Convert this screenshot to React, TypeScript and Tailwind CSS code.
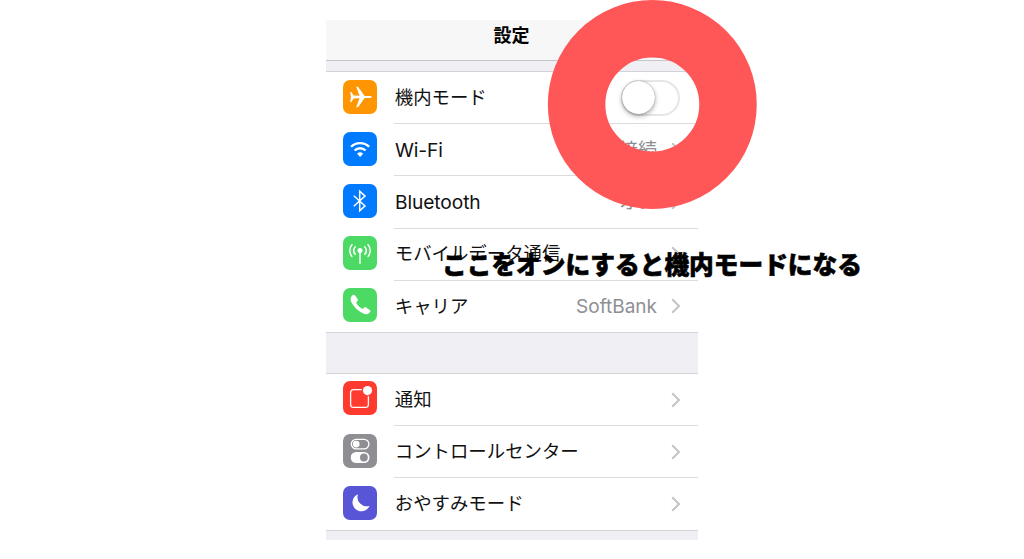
import type { ReactNode } from "react"

function Plane() {
    return (
        <svg viewBox="0 0 34 34" className="size-full" fill="#fff">
            <path d="M7.200 12h1.200l2.300 3.600 5.800.2-3.300-9.100h1.800l6.600 9.300h5.200c1.100 0 1.900.4 1.900 1s-.8 1-1.900 1h-5.200L15 27.200h-1.800l3.300-9-5.800.2L8.400 22H7.200l.7-5z" />
        </svg>
    )
}

function Wifi() {
    return (
        <svg viewBox="0 0 34 34" className="size-full" fill="none" stroke="#fff" strokeWidth="2.3">
            <path d="M8 14.8a13 13 0 0 1 18.2 0" />
            <path d="M11.6 18.5a7.9 7.9 0 0 1 11 0" />
            <path d="M17.1 25l-3.1-3.2a4.5 4.5 0 0 1 6.2 0z" fill="#fff" stroke="none" />
        </svg>
    )
}

function Bluetooth() {
    return (
        <svg viewBox="0 0 34 34" className="size-full" fill="none" stroke="#fff" strokeWidth="1.5">
            <path d="M10.800 11.700l11.200 10.200-5.300 4.800V7.300l5.300 4.800-11.200 10.200" />
        </svg>
    )
}

function Antenna() {
    return (
        <svg viewBox="0 0 34 34" className="size-full" fill="none" stroke="#fff" strokeWidth="1.5" strokeLinecap="round">
            <circle cx="17" cy="14.6" r="2.5" fill="#fff" stroke="none" />
            <path d="M17 15v12.3M12.2 10.900a5.700 5.700 0 0 0 0 7.400M21.800 10.900a5.700 5.700 0 0 1 0 7.400M8.900 8.700a9.200 9.200 0 0 0 0 11.800M25.100 8.700a9.200 9.200 0 0 1 0 11.800" />
        </svg>
    )
}

function Phone() {
    return (
        <svg viewBox="0 0 34 34" className="size-full" fill="#fff">
            <path d="M9.200 7.600c1-1 2-1.200 2.700-.3l2.700 3.800c.6.9.3 1.600-.5 2.300-.8.6-1 1.200-.5 2 1.300 2.100 3 3.700 5.200 5 .8.500 1.400.3 2-.5.7-.9 1.500-1 2.300-.5l3.700 2.600c.9.7.8 1.600-.1 2.600-1.700 2-4.200 2-7 .6-5.200-2.500-9-6.500-11.200-10.700-1.400-2.700-1.200-5.100.7-6.900z" />
        </svg>
    )
}

function Notice() {
    return (
        <svg viewBox="0 0 34 34" className="size-full" fill="none" stroke="#fff" strokeWidth="1.3">
            <path d="M18.800 8.600h-8a3.200 3.200 0 0 0-3.200 3.200v11.400a3.200 3.200 0 0 0 3.200 3.200h11.400a3.200 3.200 0 0 0 3.200-3.200v-8" />
            <circle cx="24.500" cy="9.600" r="4.600" fill="#fff" stroke="none" />
        </svg>
    )
}

function Controls() {
    return (
        <svg viewBox="0 0 34 34" className="size-full">
            <rect x="8.300" y="5.300" width="17.600" height="9.600" rx="4.800" fill="none" stroke="#fff" strokeWidth="1.3" />
            <circle cx="13.200" cy="10.100" r="3.400" fill="#fff" />
            <rect x="7.700" y="18" width="18.800" height="11" rx="5.500" fill="#fff" />
            <circle cx="20.900" cy="23.500" r="3.900" fill="#8e8e93" />
        </svg>
    )
}

function Moon() {
    return (
        <svg viewBox="0 0 34 34" className="size-full" fill="#fff">
            <path d="M15 8.300a8.800 8.800 0 1 0 11.500 11.400A9 9 0 0 1 15 8.300z" />
        </svg>
    )
}

function Chevron() {
    return (
        <svg viewBox="0 0 10 16" className="ml-[13px] h-4 w-2.5" fill="none" stroke="#c3c3c8" strokeWidth="2">
            <path d="M1.200 1.200L8 8l-6.800 6.800" />
        </svg>
    )
}

function Switch() {
    return (
        <div className="mr-px flex h-9 w-[59px] rounded-full border-2 border-[#e6e6e6]">
            <div className="-mt-px -ml-px size-[33px] rounded-full bg-white shadow-[0_2px_5px_rgba(0,0,0,0.35),0_0_1px_rgba(0,0,0,0.5)]" />
        </div>
    )
}

function Row({ icon, color, label, latin, value, toggle, last }: {
    icon: ReactNode;
    color: string;
    label: string;
    latin?: boolean;
    value?: string;
    toggle?: boolean;
    last?: boolean;
}) {
    return (
        <div className={`flex h-[52.2px] pl-[17px] ${last ? "border-b border-[#d3d3d7]" : ""}`}>
            <div className={`mt-[7.5px] size-[34px] shrink-0 rounded-[7px] ${color}`}>{icon}</div>
            <div className={`ml-[17px] flex grow items-center pr-[17px] ${last ? "" : "border-b border-[#dcdcdf]"}`}>
                <span className={latin ? "pt-px pl-px text-[19.2px] tracking-[-0.1px]" : "pl-[0.8px] text-[18.4px]"}>{label}</span>
                <div className="ml-auto flex items-center">
                    {value && <span className="mr-px pt-[2px] text-[19px] text-[#8e8e93]">{value}</span>}
                    {toggle ? <Switch /> : <Chevron />}
                </div>
            </div>
        </div>
    )
}

export default function App() {
    return (
        <div className="relative h-[559px] w-[1024px] overflow-hidden bg-white pt-5 font-['Inter','Noto_Sans_CJK_JP',sans-serif] text-[#111]">
            <div className="ml-[326px] flex h-[520px] w-[372px] flex-col bg-[#efeff4]">
                <div className="h-[41px] shrink-0 border-b border-[#c5c5cb] bg-[#f7f7f8] pr-px text-center text-[18px] leading-[31px] font-bold text-black">
                    設定
                </div>
                <div className="mt-[10px] border-t border-[#d3d3d7] bg-white">
                    <Row icon={<Plane />} color="bg-[#ff9500]" label="機内モード" toggle />
                    <Row icon={<Wifi />} color="bg-[#007aff]" label="Wi-Fi" latin value="未接続" />
                    <Row icon={<Bluetooth />} color="bg-[#007aff]" label="Bluetooth" latin value="オン" />
                    <Row icon={<Antenna />} color="bg-[#4cd964]" label="モバイルデータ通信" />
                    <Row icon={<Phone />} color="bg-[#4cd964]" label="キャリア" value="SoftBank" last />
                </div>
                <div className="mt-[40px] border-t border-[#d3d3d7] bg-white">
                    <Row icon={<Notice />} color="bg-[#ff3b30]" label="通知" />
                    <Row icon={<Controls />} color="bg-[#8e8e93]" label="コントロールセンター" />
                    <Row icon={<Moon />} color="bg-[#5856d6]" label="おやすみモード" last />
                </div>
            </div>

            <svg viewBox="0 0 210 210" className="absolute top-0 left-[547px] size-[210px]" fill="none">
                <circle cx="105.3" cy="104.5" r="75.7" stroke="#ff5757" strokeWidth="57.5" />
            </svg>
            <p className="absolute top-[247px] left-[442px] text-[24.7px] leading-9 font-black whitespace-nowrap text-black [-webkit-text-stroke:0.6px_#000]">
                ここをオンにすると機内モードになる
            </p>
        </div>
    )
}
